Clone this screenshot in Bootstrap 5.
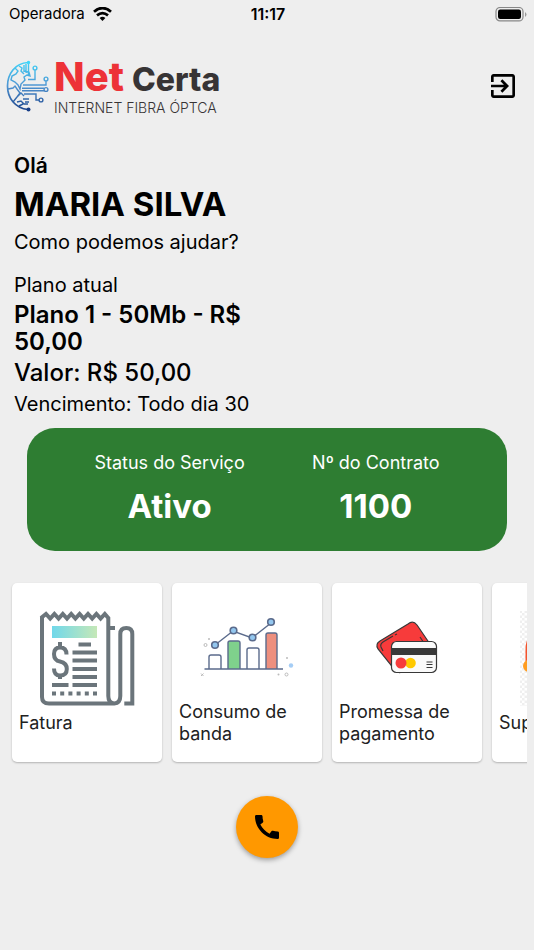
<!DOCTYPE html>
<html lang="pt-BR">
<head>
<meta charset="utf-8">
<meta name="viewport" content="width=device-width, initial-scale=1">
<title>Net Certa</title>
<link href="https://cdn.jsdelivr.net/npm/bootstrap@5.3.0/dist/css/bootstrap.min.css" rel="stylesheet">
<style>
body { background: #eee; color: #000; font-family: Inter, "Liberation Sans", sans-serif; }
svg { display: block; flex-shrink: 0; }
.status-bar { display: grid; grid-template-columns: 1fr auto 1fr; height: 28px; padding: 0 7px 0 9px; font-size: 15px; }
.status-time { font-size: 16px; }
.app-header { height: 116px; padding: 0 15px 0 6px; }
.brand { color: #373435; gap: 5px; }
.brand-name { font-weight: 800; font-size: 32px; line-height: 40px; gap: 8px; }
.brand-net { color: #ed3237; font-size: 40px; }
.brand-tag { font-weight: 300; font-size: 14px; line-height: 16px; }
.intro { padding: 8px 14px 0; }
.hello { font-size: 21px; line-height: 28px; font-weight: 600; }
.user-name { font-size: 33px; line-height: 48px; font-weight: 700; }
.ask { font-size: 20px; line-height: 28px; margin-bottom: 15px; }
.t-small { font-size: 20px; line-height: 28px; }
.plan { font-size: 24px; line-height: 27px; font-weight: 600; max-width: 253px; margin: 2px 0; }
.price { font-size: 24px; line-height: 32px; font-weight: 500; }
.due { font-size: 20px; line-height: 30px; }
.contract { background: #2e7d32; border-radius: 28px; margin: 9px 27px 0; padding: 18px 0 19px; }
.contract dt { font-weight: 400; font-size: 18px; line-height: 34px; }
.contract dd { font-weight: 700; font-size: 33px; line-height: 52px; }
.tiles { margin: 26px 7px 0; padding: 6px 5px; gap: 10px; overflow-x: auto; scrollbar-width: none; }
.tiles::-webkit-scrollbar { display: none; }
.tile { flex: 0 0 150px; height: 179px; background: #fff; border-radius: 5px; color: #212121; box-shadow: 0 1px 2px rgba(0,0,0,.25); text-align: left; }
.tile svg { overflow: visible; }
.tile-label { height: 44px; padding: 0 7px; font-size: 18px; line-height: 22px; }
.call { width: 62px; height: 62px; background: #ff9800; box-shadow: 0 2px 5px rgba(0,0,0,.35); margin: 28px auto; }
</style>
</head>
<body>
<div class="status-bar align-items-center">
  <div class="d-flex align-items-center gap-2"><span>Operadora</span>
    <svg width="19" height="15" viewBox="0 0 19 15" fill="none" stroke="#000" stroke-width="2.800"><path d="M1 4.700Q9.500-2.500 18 4.700M4 8.300q5.500-4.400 11 0"/><path d="M6.600 11q2.900-2.300 5.800 0L9.500 14z" fill="#000" stroke="none"/></svg>
  </div>
  <span class="status-time fw-semibold">11:17</span>
  <svg class="ms-auto" width="32" height="15" viewBox="0 0 32 15"><rect x="1" y=".5" width="27" height="13.400" rx="4" fill="none" stroke="#888" stroke-width="1.200"/><rect x="3" y="2.500" width="23" height="9.400" rx="2.200"/><path d="M30 5q3 2.500 0 5z" fill="#999"/></svg>
</div>

<header class="app-header d-flex align-items-center justify-content-between">
  <div class="brand d-flex align-items-center">
    <svg width="43" height="52" viewBox="0 0 43 52" fill="none" stroke="url(#globe)" stroke-width="1.400">
      <defs><linearGradient id="globe" gradientUnits="userSpaceOnUse" x1="0" y1="0" x2="0" y2="52"><stop offset="0" stop-color="#3fd6fa"/><stop offset=".5" stop-color="#5095d2"/><stop offset="1" stop-color="#173d86"/></linearGradient></defs>
      <path d="M22 2.500C9 3 1.500 14 1.500 26S9 48 22 49.500" stroke-width="1.700"/>
      <path d="M9 8l3 3-2 3-4 2-1 4 4 2 3 3 2 4 1-5 4-4-1-3 3-2 3 1-1-4-5-1M13 6l3 2-1 3 3 3M18 5v7M20 4v9M22.500 3v12"/>
      <path d="M2 29l5-1 2-2 2 3 3 4-3 4-4 5M11 37l4-4 3 3M11 42l4-1 3 3 4 0M13 46l4-2M17 39h6M19 42h4"/>
      <path d="M29 10v9.500h-7M40 21v4H17M16 28.300h22M16 30.700h22M18 34h12v6h3"/>
      <circle cx="29" cy="8" r="1.900"/><circle cx="40" cy="19" r="1.900"/><circle cx="40" cy="29.500" r="1.900"/><circle cx="35" cy="40" r="1.900"/>
      <circle cx="22.500" cy="2.500" r="1.700" fill="#3fd6fa" stroke="none"/><circle cx="22.500" cy="49.500" r="2" fill="#173d86" stroke="none"/>
    </svg>
    <div>
      <div class="brand-name d-flex align-items-baseline"><span class="brand-net">Net</span><span>Certa</span></div>
      <div class="brand-tag">INTERNET FIBRA ÓPTCA</div>
    </div>
  </div>
  <button type="button" class="btn p-0 border-0" aria-label="Sair">
    <svg width="32" height="32" viewBox="0 0 24 24"><path d="M10.090 15.590L11.500 17l5-5-5-5-1.410 1.410L12.670 11H3v2h9.670l-2.580 2.590zM19 3H5c-1.110 0-2 .9-2 2v4h2V5h14v14H5v-4H3v4c0 1.100.89 2 2 2h14c1.100 0 2-.9 2-2V5c0-1.100-.9-2-2-2z"/></svg>
  </button>
</header>

<main>
  <section class="intro">
    <div class="hello">Olá</div>
    <h1 class="user-name mb-0">MARIA SILVA</h1>
    <p class="ask">Como podemos ajudar?</p>
    <div class="t-small">Plano atual</div>
    <h2 class="plan">Plano 1 - 50Mb - R$ 50,00</h2>
    <div class="price">Valor: R$ 50,00</div>
    <div class="due">Vencimento: Todo dia 30</div>
  </section>

  <dl class="contract d-flex justify-content-evenly text-white text-center mb-0">
    <div><dt>Status do Serviço</dt><dd class="mb-0">Ativo</dd></div>
    <div><dt>Nº do Contrato</dt><dd class="mb-0">1100</dd></div>
  </dl>

  <nav class="tiles d-flex" aria-label="Serviços">
    <button type="button" class="tile btn p-0 border-0 d-flex flex-column">
      <svg width="150" height="118" viewBox="0 0 150 118" fill="none" stroke="#6b757b" stroke-width="4">
        <defs><linearGradient id="strip"><stop offset="0" stop-color="#70d8ea"/><stop offset="1" stop-color="#c5e8b7"/></linearGradient></defs>
        <path d="M29 35l5-4 4.200 4.500 4.200-4.500 4.200 4.500 4.200-4.500 4.200 4.500 4.200-4.500 4.200 4.500 4.200-4.500 4.200 4.500 4.200-4.500 4.200 4.500 4.200-4.500 4.200 4.500 4.200-4.500 3.500 4V113q0 7 6 7.500 6-.5 6-7.500V51q0-6 6-6t6 6v69.500h-8M30 34v80q0 6.500 7 6.500h66M97 45h6"/>
        <rect x="40" y="43" width="45" height="12" fill="url(#strip)" stroke="none"/>
        <path d="M54.500 71.500q0-7-6.500-7-6 0-6 6.500t6 7.500q6.800 1.500 6.800 7.500 0 6.500-6.800 6.500-6 0-6-7M48 59v5M48 92v4M66.500 61.500H79M60.500 69.500H85M60.500 77.500H85M60.500 86H85M60.500 94H85M60.500 102H85M40 102h16.500"/>
        <path d="M40 110.500h45" stroke-dasharray="4 4.200"/>
      </svg>
      <span class="tile-label d-flex align-items-center">Fatura</span>
    </button>
    <button type="button" class="tile btn p-0 border-0 d-flex flex-column">
      <svg width="150" height="118" viewBox="0 0 150 118" fill="none" stroke="#5b6b8c" stroke-width="1.400">
        <path d="M37 86V74q0-2 2-2h8q2 0 2 2v12M75 86V67q0-2 2-2h8q2 0 2 2v19" fill="#fff"/>
        <path d="M56 86V60q0-2 2-2h8q2 0 2 2v26" fill="#7fd18c"/>
        <path d="M94 86V52q0-2 2-2h7q2 0 2 2v34" fill="#ed8f7e"/>
        <path d="M32.500 86H111M43 62l18-14 19 7 19-15"/>
        <g fill="#93c7ef" stroke-width="1.600"><circle cx="43" cy="62" r="3.300"/><circle cx="61.500" cy="47.500" r="3.300"/><circle cx="80.500" cy="54.500" r="3.300"/><circle cx="99" cy="39" r="3.300"/></g>
        <g stroke="#bbb" stroke-width="1"><circle cx="33.500" cy="62" r="1.500"/><circle cx="114.500" cy="91.500" r="1.500"/><path d="M29 90.500l2.500 2.500m0-2.500L29 93"/></g>
        <g fill="#bbb" stroke="none"><circle cx="37" cy="56" r="1"/><circle cx="106.500" cy="91.500" r="1"/><circle cx="115" cy="75" r="1"/><circle cx="119" cy="82.500" r="2.200" fill="#a5cdf5"/></g>
      </svg>
      <span class="tile-label d-flex align-items-center">Consumo de banda</span>
    </button>
    <button type="button" class="tile btn p-0 border-0 d-flex flex-column">
      <svg width="150" height="118" viewBox="0 0 150 118" fill="none" stroke="#383838" stroke-width="1.200">
        <path d="M48 58l28-17q5-4 9 1l15 22q3 5-2 8l-28 17q-4 2-7-2L46 66q-3-5 2-8z" fill="#f73b3b"/>
        <path d="M51 68l-2-4q-1-3 2-5l10-6M63 52l2-1M88 54l4 6"/>
        <rect x="59.500" y="58.500" width="45" height="31" rx="5" fill="#fafafa"/>
        <path d="M60 65h44v7H60z" fill="#383838" stroke="none"/>
        <circle cx="78.500" cy="80" r="5.300" fill="#ffc900" stroke="none"/><circle cx="69" cy="80" r="5.500" fill="#f73b3b" stroke="none"/>
        <path d="M94.500 79h6M94.500 81.500h6M94.500 84.500h6"/>
      </svg>
      <span class="tile-label d-flex align-items-center">Promessa de pagamento</span>
    </button>
    <button type="button" class="tile btn p-0 border-0 d-flex flex-column">
      <svg width="150" height="118" viewBox="0 0 150 118">
        <defs><pattern id="checks" width="5" height="5" patternUnits="userSpaceOnUse"><path d="M0 0h2.500v5H5V2.500H0z" fill="#efefef"/></pattern></defs>
        <rect x="28" y="28" width="94" height="95" fill="url(#checks)"/>
        <path d="M33.500 78V66a41 32 0 0 1 83 0v12h-8V66a33 25 0 0 0-66 0v12z" fill="#f4532c"/>
        <rect x="31" y="77" width="18" height="12" rx="6" fill="#ff9c1f"/><rect x="101" y="77" width="18" height="12" rx="6" fill="#ff9c1f"/>
      </svg>
      <span class="tile-label d-flex align-items-center">Suporte</span>
    </button>
  </nav>

  <button type="button" class="call btn rounded-circle border-0 p-0 d-flex align-items-center justify-content-center" aria-label="Ligar">
    <svg width="32" height="32" viewBox="0 0 24 24"><path d="M20.010 15.380c-1.230 0-2.420-.2-3.530-.56-.35-.12-.74-.03-1.010.24l-1.570 1.970c-2.830-1.350-5.480-3.900-6.890-6.830l1.950-1.660c.27-.28.35-.67.24-1.020-.37-1.110-.56-2.300-.56-3.530 0-.54-.45-.99-.99-.99H4.190C3.650 3 3 3.240 3 3.990 3 13.280 10.730 21 20.010 21c.71 0 .99-.63.99-1.180v-3.450c0-.54-.45-.99-.99-.99z"/></svg>
  </button>
</main>
<script src="https://cdn.jsdelivr.net/npm/bootstrap@5.3.0/dist/js/bootstrap.bundle.min.js"></script>
</body>
</html>
